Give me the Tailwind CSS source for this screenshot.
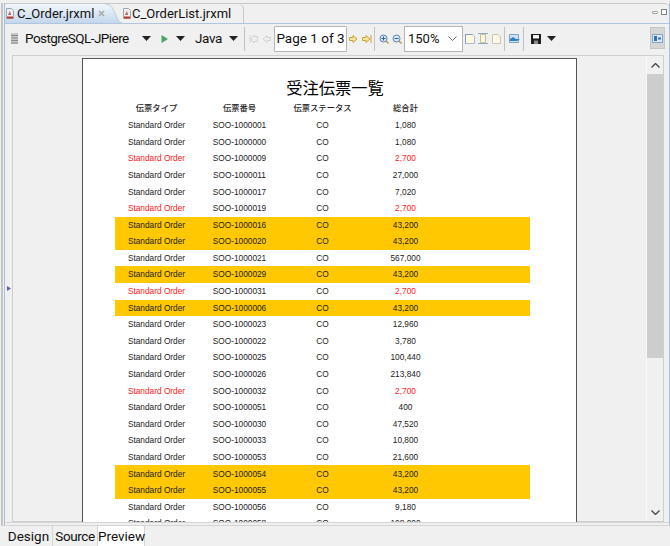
<!DOCTYPE html>
<html lang="ja">
<head>
    <meta charset="UTF-8">
    <title>C_Order.jrxml - Preview</title>
    <script src="https://cdn.jsdelivr.net/npm/@tailwindcss/browser@4"></script>
</head>
<body class="w-[670px] h-[546px] overflow-hidden bg-[#f0f0f0]">
    <div class="w-[670px] h-[546px] flex flex-col pt-[3px] pl-[1px] font-['Roboto',sans-serif] text-[#111]">
        <div class="flex-1 min-h-0 flex">
            <!-- left gutter of the workbench -->
            <div class="w-[2px] bg-[#c4c4c4] shrink-0"></div>
            <div class="w-[667px] ml-[1px] flex flex-col border-l border-r border-[#a8bfdc]">

                <!-- editor tabs -->
                <div class="h-[20px] flex relative border-t border-[#c8c8c8] rounded-tr-[5px] bg-[#f0f0f0]">
                    <div class="w-[100px] h-[19px] flex items-center gap-[2px] bg-gradient-to-b from-[#f3f7fc] to-[#c3d6ec] rounded-tl-[4px] relative shrink-0">
                        <svg width="10" height="11" viewBox="0 0 10 11" class="shrink-0"><path d="M1.5.5h5l2 2v8h-7z" fill="#eee" stroke="#9aa4b4"/><path d="M2 8.500h6v2H2z" fill="#c0392b"/><path d="M3 7l2-4 1 4z" fill="#b85a50"/></svg>
                        <span class="w-[77px] text-[13px] leading-[19px] whitespace-nowrap">C_Order.jrxml</span>
                        <svg width="7" height="7" viewBox="0 0 7 7" class="ml-[2px] shrink-0"><path d="M1 1l5 5M6 1L1 6" stroke="#a8a8a8" stroke-width="1.500"/></svg>
                    </div>
                    <svg width="17" height="19" viewBox="0 0 24 19" preserveAspectRatio="none" class="shrink-0">
                        <defs><linearGradient id="tabfill" x1="0" y1="0" x2="0" y2="1"><stop offset="0" stop-color="#f3f7fc"/><stop offset="1" stop-color="#c3d6ec"/></linearGradient></defs>
                        <path d="M0 0C8 0 10 3 14 9s6 10 10 10H0z" fill="url(#tabfill)"/><path d="M0 0C8 0 10 3 14 9s6 10 10 10" fill="none" stroke="#b7c4d4"/>
                    </svg>
                    <div class="w-[122px] h-[19px] flex items-center border-r border-[#c8c8c8] rounded-tr-[5px] shrink-0">
                        <svg width="10" height="11" viewBox="0 0 10 11" class="shrink-0"><path d="M1.5.5h5l2 2v8h-7z" fill="#eee" stroke="#9aa4b4"/><path d="M2 8.500h6v2H2z" fill="#c0392b"/><path d="M3 7l2-4 1 4z" fill="#b85a50"/></svg>
                        <span class="text-[13px] leading-[19px] whitespace-nowrap">C_OrderList.jrxml</span>
                    </div>
                    <div class="absolute right-[2px] top-[5px] flex items-center gap-[3px]">
                        <div class="w-[6px] h-[3px] border border-[#a0a0a0] bg-white rounded-[1px]"></div>
                        <div class="w-[6px] h-[6px] border border-[#808080] bg-white"></div>
                    </div>
                </div>

                <!-- report toolbar -->
                <div class="h-[32px] flex items-center border-t border-[#b0c6e0] pl-[5px] pb-[2px] relative">
                    <svg width="9" height="13" viewBox="0 0 9 13" class="shrink-0"><path d="M1 1h7v11H1z" fill="#c8c8c8"/><path d="M1 3.500h7M1 6h7M1 8.500h7M1 11h7" stroke="#8a8a8a"/></svg>
                    <span class="ml-[6px] w-[112px] text-[13.500px] tracking-[-0.55px] leading-none whitespace-nowrap">PostgreSQL-JPiere</span>
                    <svg width="9" height="5" viewBox="0 0 9 5" class="ml-[5px] shrink-0"><path d="M0 0h9L4.500 5z" fill="#222"/></svg>
                    <svg width="7" height="8" viewBox="0 0 7 8" class="ml-[10px] shrink-0"><path d="M.5 0L7 4 .5 8z" fill="#4aa564"/></svg>
                    <svg width="9" height="5" viewBox="0 0 9 5" class="ml-[8px] shrink-0"><path d="M0 0h9L4.500 5z" fill="#222"/></svg>
                    <span class="ml-[10px] w-[28px] text-[13.500px] tracking-[-0.4px] leading-none whitespace-nowrap">Java</span>
                    <svg width="9" height="5" viewBox="0 0 9 5" class="ml-[6px] shrink-0"><path d="M0 0h9L4.500 5z" fill="#222"/></svg>
                    <div class="ml-[6px] w-[1px] h-[24px] bg-[#c2c2c2]"></div>
                    <svg width="9" height="8" viewBox="0 0 9 8" class="ml-[4px] shrink-0"><path d="M1 0v8M8.500 1.500H5V0L1.500 4 5 8V6.500h3.500z" fill="#eee" stroke="#d2d2d2"/></svg>
                    <svg width="9" height="8" viewBox="0 0 9 8" class="ml-[4px] shrink-0"><path d="M8.500 2.500H5V.500L1 4l4 3.500v-2h3.500z" fill="#eee" stroke="#d2d2d2"/></svg>
                    <div class="ml-[3px] w-[73px] h-[26px] bg-white border border-[#b4b4b4] rounded-[1px] flex items-center justify-center text-[13.500px] leading-none whitespace-nowrap">Page 1 of 3</div>
                    <svg width="9" height="8" viewBox="0 0 9 8" class="ml-[2px] shrink-0"><path d="M.5 2.500H4V.500L8 4 4 7.500v-2H.5z" fill="#f6e3a6" stroke="#c9a234"/></svg>
                    <svg width="10" height="8" viewBox="0 0 10 8" class="ml-[4px] shrink-0"><path d="M.5 2.500H4V.500L8 4 4 7.500v-2H.5z" fill="#f6e3a6" stroke="#c9a234"/><path d="M9 0v8" stroke="#c9a234"/></svg>
                    <div class="ml-[2px] w-[1px] h-[24px] bg-[#c2c2c2]"></div>
                    <svg width="10" height="10" viewBox="0 0 10 10" class="ml-[4px] shrink-0"><circle cx="4.500" cy="4.500" r="3.500" fill="#dbe8f6" stroke="#5b83b8"/><path d="M7 7l2.500 2.500" stroke="#b59a48" stroke-width="1.500"/><path d="M2.500 4.500h4M4.500 2.500v4" stroke="#2c5ea3"/></svg>
                    <svg width="10" height="10" viewBox="0 0 10 10" class="ml-[3px] shrink-0"><circle cx="4.500" cy="4.500" r="3.500" fill="#dbe8f6" stroke="#5b83b8"/><path d="M7 7l2.500 2.500" stroke="#b59a48" stroke-width="1.500"/><path d="M2.500 4.500h4" stroke="#2c5ea3"/></svg>
                    <div class="ml-[2px] w-[59px] h-[26px] bg-white border border-[#b4b4b4] flex items-center justify-between pl-[3px] pr-[5px] text-[13px] leading-none">
                        <span>150%</span>
                        <svg width="9" height="5" viewBox="0 0 9 5"><path d="M.5.500l4 4 4-4" fill="none" stroke="#666"/></svg>
                    </div>
                    <svg width="10" height="10" viewBox="0 0 10 10" class="ml-[2px] shrink-0"><path d="M.5.500h7l2 2v7h-9z" fill="#fdf8e2" stroke="#a9bbd0"/><path d="M.5.500v9M.5.500h7" stroke="#7f9dc0"/></svg>
                    <svg width="10" height="11" viewBox="0 0 10 11" class="ml-[3px] shrink-0"><path d="M2.500 1.500h5v8h-5z" fill="#fdf8e2" stroke="#c6c09a"/><path d="M0 .500h10M0 10.500h10" stroke="#8fa8c6"/></svg>
                    <svg width="9" height="10" viewBox="0 0 9 10" class="ml-[4px] shrink-0"><path d="M.5.500h5.500l2.500 2.500v6.500H.5z" fill="#fdf9e6" stroke="#c9c6b0"/></svg>
                    <div class="ml-[3px] w-[1px] h-[24px] bg-[#c2c2c2]"></div>
                    <svg width="11" height="9" viewBox="0 0 11 9" class="ml-[4px] shrink-0"><path d="M.5.500h9v8h-9z" fill="#cfe0f2" stroke="#7fa3cc"/><path d="M1 5l3-2 3 2h4L8 7H1z" fill="#2f7fc4"/></svg>
                    <div class="ml-[3px] w-[1px] h-[24px] bg-[#c2c2c2]"></div>
                    <svg width="10" height="10" viewBox="0 0 10 10" class="ml-[7px] shrink-0"><path d="M0 0h10v10H0z" fill="#1c1c1c"/><path d="M2 1h6v3.500H2z" fill="#f2f2f2"/><path d="M3 6.500h4V10H3z" fill="#888"/></svg>
                    <svg width="9" height="5" viewBox="0 0 9 5" class="ml-[6px] shrink-0"><path d="M0 0h9L4.500 5z" fill="#222"/></svg>
                    <div class="absolute left-[645px] top-[3px] w-[15px] h-[22px] bg-[#d6d6d6] border border-[#c6c6c6] flex items-center justify-center">
                        <svg width="11" height="9" viewBox="0 0 11 9"><path d="M.5.500h10v8H.5z" fill="#dfe9f6" stroke="#7fa3cc"/><path d="M2 2h3v5H2z" fill="#2f6fb0"/><path d="M6 4.500h3" stroke="#2f6fb0" stroke-width="2"/></svg>
                    </div>
                </div>

                <!-- preview area -->
                <div class="h-[467px] flex">
                    <div class="w-[7px] shrink-0 flex items-center justify-center">
                        <svg width="4" height="5" viewBox="0 0 4 5"><path d="M0 0l4 2.500L0 5z" fill="#5f63a8"/></svg>
                    </div>
                    <div class="w-[652px] flex border border-[#cfcfcf]">
                        <div class="flex-1 flex justify-start pl-[69px] pt-[2px] min-w-0">
                            <div id="page" class="w-[495px] h-[464px] overflow-hidden bg-white border-t border-l border-r border-[#555] font-['Liberation_Sans','Noto_Sans_CJK_JP',sans-serif]">
                                <h1 class="h-[40px] pt-[16px] pl-[11px] text-center text-[16.300px] leading-[24px] font-['Noto_Sans_CJK_JP',sans-serif] font-normal text-black">受注伝票一覧</h1>
                                <div class="ml-[32px] mb-[2px] w-[415px] grid grid-cols-5 h-[16px] items-center text-center text-[8.300px] leading-none text-[#222] font-['Noto_Sans_CJK_JP',sans-serif] font-medium">
                                    <span>伝票タイプ</span>
                                    <span>伝票番号</span>
                                    <span>伝票ステータス</span>
                                    <span>総合計</span>
                                    <span></span>
                                </div>
                                <div id="rows" class="ml-[32px] w-[415px]"></div>
                            </div>
                        </div>
                        <!-- vertical scrollbar -->
                        <div class="w-[17px] shrink-0 border-l border-[#f8f8f8] flex flex-col items-center">
                            <div class="h-[18px] w-full flex items-center justify-center">
                                <svg width="9" height="5" viewBox="0 0 9 5"><path d="M.5 4.500l4-4 4 4" fill="none" stroke="#444" stroke-width="1.300"/></svg>
                            </div>
                            <div class="h-[284px] w-full bg-[#cdcdcd]"></div>
                            <div class="flex-1"></div>
                            <div class="h-[18px] w-full flex items-center justify-center">
                                <svg width="9" height="5" viewBox="0 0 9 5"><path d="M.5.500l4 4 4-4" fill="none" stroke="#444" stroke-width="1.300"/></svg>
                            </div>
                        </div>
                    </div>
                </div>
                <div class="h-[3px] border-t border-[#d4d4d4]"></div>
            </div>
        </div>

        <!-- Design / Source / Preview tabs -->
        <div class="h-[21px] flex pl-[4px] border-t border-[#d4d4d4] text-[13.500px] leading-[20px] bg-[#f0f0f0]">
            <div class="w-[47px] text-center">Design</div>
            <div class="w-[45px] text-center tracking-[-0.4px] border-l border-[#d4d4d4]">Source</div>
            <div class="w-[48px] text-center bg-white border-l border-r border-[#d4d4d4]">Preview</div>
        </div>
    </div>

    <script>
        // o = normal, r = red text, y = yellow band
        const rows = [
            ['o', '1000001', '1,080'], ['o', '1000000', '1,080'], ['r', '1000009', '2,700'],
            ['o', '1000011', '27,000'], ['o', '1000017', '7,020'], ['r', '1000019', '2,700'],
            ['y', '1000016', '43,200'], ['y', '1000020', '43,200'], ['o', '1000021', '567,000'],
            ['y', '1000029', '43,200'], ['r', '1000031', '2,700'], ['y', '1000006', '43,200'],
            ['o', '1000023', '12,960'], ['o', '1000022', '3,780'], ['o', '1000025', '100,440'],
            ['o', '1000026', '213,840'], ['r', '1000032', '2,700'], ['o', '1000051', '400'],
            ['o', '1000030', '47,520'], ['o', '1000033', '10,800'], ['o', '1000053', '21,600'],
            ['y', '1000054', '43,200'], ['y', '1000055', '43,200'], ['o', '1000056', '9,180'],
            ['o', '1000058', '108,000']
        ];
        const rowClass = 'grid grid-cols-5 h-[16.6px] items-center text-center text-[8.300px] leading-none';
        const styles = { o: 'text-[#222]', r: 'text-[#ff2020]', y: 'text-[#222] bg-[#ffc800]' };
        const redTotal = 'text-[#ff2020]';
        document.getElementById('rows').innerHTML = rows.map(([kind, no, total]) => `
            <div class="${rowClass} ${kind === 'y' ? styles.y : styles.o}">
                <span class="${kind === 'r' ? redTotal : ''}">Standard Order</span>
                <span>SOO-${no}</span>
                <span>CO</span>
                <span class="${kind === 'r' ? redTotal : ''}">${total}</span>
                <span></span>
            </div>`).join('');
    </script>
</body>
</html>
